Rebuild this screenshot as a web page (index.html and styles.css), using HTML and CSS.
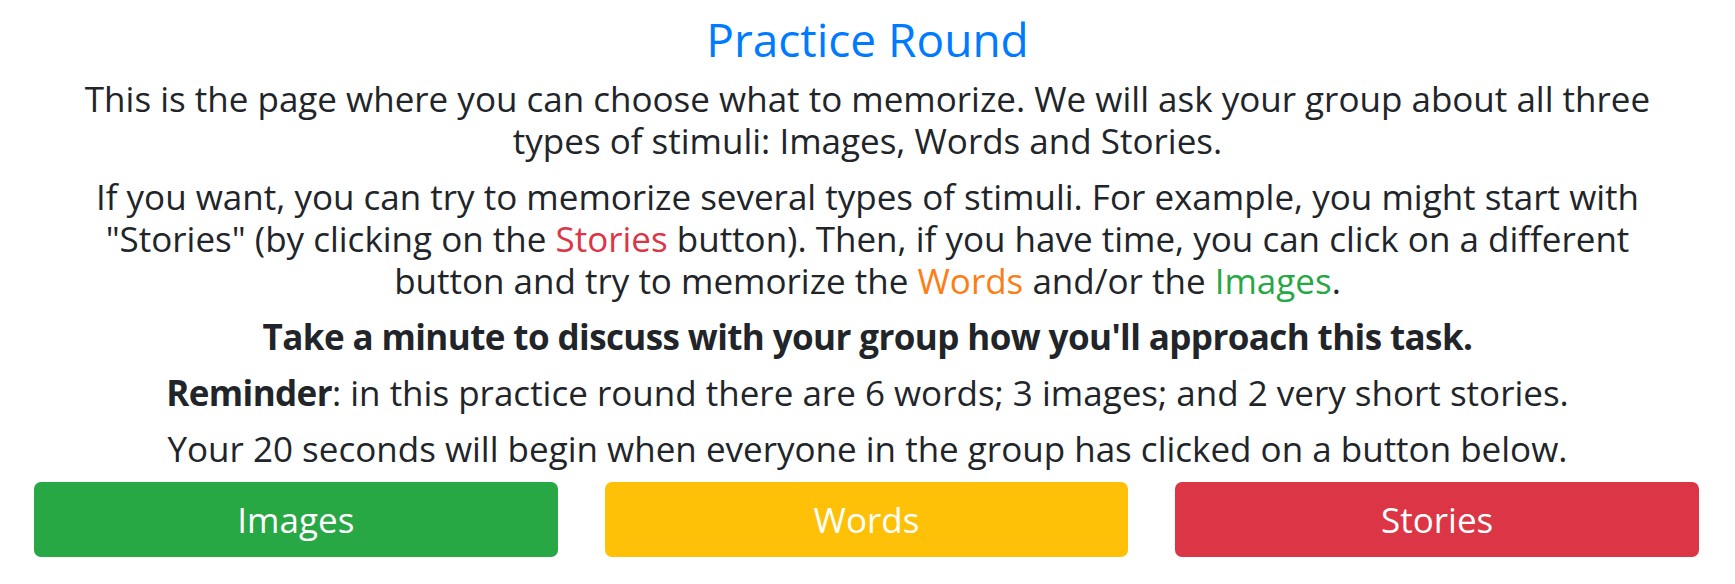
FILE: index.html
```html
<!DOCTYPE html>
<html lang="en">
<head>
<meta charset="utf-8">
<title>Practice Round</title>
<link rel="stylesheet" href="styles.css">
</head>
<body>
<main class="page">
  <h1 class="title">Practice Round</h1>
  <div class="intro">
    <p class="para">This is the page where you can choose what to memorize. We will ask your group about all three types of stimuli: Images, Words and Stories.</p>
    <p class="para">If you want, you can try to memorize several types of stimuli. For example, you might start with "Stories" (by clicking on the <span class="c-stories">Stories</span> button). Then, if you have time, you can click on a different button and try to memorize the <span class="c-words">Words</span> and/or the <span class="c-images">Images</span>.</p>
    <p class="para para-bold">Take a minute to discuss with your group how you'll approach this task.</p>
    <p class="para"><strong class="strong">Reminder</strong>: in this practice round there are 6 words; 3 images; and 2 very short stories.</p>
    <p class="para">Your 20 seconds will begin when everyone in the group has clicked on a button below.</p>
  </div>
  <div class="buttons">
    <button class="btn btn-green" type="button">Images</button>
    <button class="btn btn-yellow" type="button">Words</button>
    <button class="btn btn-red" type="button">Stories</button>
  </div>
</main>
</body>
</html>
```

FILE: styles.css
```css
html, body {
  margin: 0;
  padding: 0;
  background: #ffffff;
}

body {
  font-family: "Open Sans", "Noto Sans", "Liberation Sans", sans-serif;
  color: #212529;
}

.page {
  padding-top: 12px;
  text-align: center;
}

.title {
  margin: 0 0 11px;
  font-size: 46px;
  font-weight: 500;
  line-height: 1.2;
  color: #007bff;
}

.intro {
  max-width: 1630px;
  margin: 0 auto;
}

.para {
  margin: 0 0 14px;
  font-size: 35px;
  font-weight: 400;
  line-height: 42px;
}

.para:last-child {
  margin-bottom: 0;
}

.para-bold,
.strong {
  font-weight: 700;
  letter-spacing: -0.6px;
}

.c-stories { color: #dc3545; }
.c-words { color: #fd7e14; }
.c-images { color: #28a745; }

.buttons {
  display: grid;
  grid-template-columns: repeat(3, 1fr);
  column-gap: 47px;
  padding: 0 36px 0 34px;
  margin-top: 12px;
}

.btn {
  display: block;
  width: 100%;
  height: 75px;
  padding: 0 20px;
  border: 0;
  border-radius: 7px;
  font-family: "Open Sans", "Noto Sans", "Liberation Sans", sans-serif;
  font-size: 35px;
  font-weight: 400;
  line-height: 52px;
  color: #ffffff;
  text-align: center;
  cursor: pointer;
}

.btn-green { background: #28a745; }
.btn-yellow { background: #ffc107; }
.btn-red { background: #dc3545; }
```
